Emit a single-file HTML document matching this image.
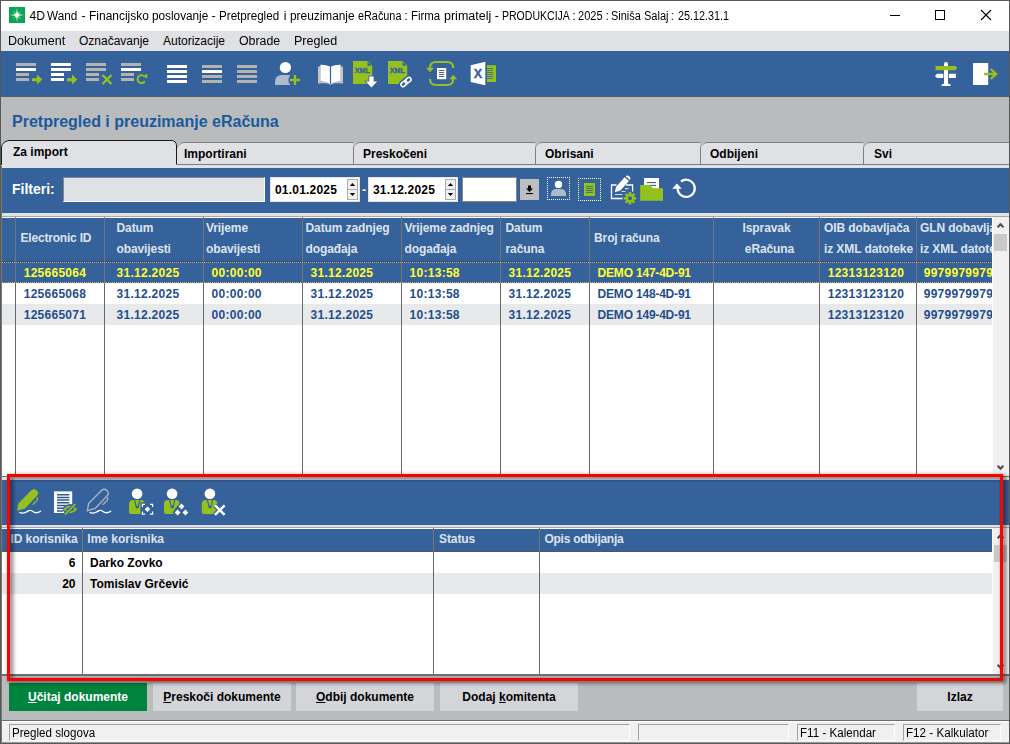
<!DOCTYPE html>
<html lang="hr">
<head>
<meta charset="utf-8">
<title>4D Wand</title>
<style>
*{box-sizing:border-box;margin:0;padding:0}
html,body{width:1010px;height:744px;overflow:hidden}
body{position:relative;background:#b9bbbd;font-family:"Liberation Sans",sans-serif;font-size:12px;color:#000}
.abs{position:absolute}
.t{position:absolute;white-space:nowrap;line-height:14px}
.b{font-weight:bold}
svg{position:absolute;overflow:visible}
/* frame */
#frame{left:0;top:0;width:1010px;height:744px;border:1px solid #585858;pointer-events:none;z-index:50}
#titlebar{left:1px;top:1px;width:1008px;height:30px;background:#fff}
#menubar{left:1px;top:31px;width:1008px;height:20px;background:#e0e1e5}
#toolbar{left:1px;top:51px;width:1008px;height:46px;background:#36629b;border-bottom:1px solid #595b5e}
.seg{font-size:12px;color:#000}
/* tabs */
.tab{position:absolute;top:142px;height:22px;background:#e0e1e5}
.tabtxt{position:absolute;font-weight:bold;font-size:12px;line-height:14px;white-space:nowrap;color:#000}
#tabband{left:1px;top:165px;width:1008px;height:3px;background:#e0e1e5}
#filterbar{left:1px;top:168px;width:1008px;height:45px;background:#36629b}
.fld{position:absolute;top:177px;height:25px;background:#fff;border:1px solid #8a8785}
.fld.d{border-color:#e3e3e3}
.fldtxt{position:absolute;font-weight:bold;font-size:12px;line-height:14px;white-space:nowrap;letter-spacing:.2px}
/* grid */
.hdr{position:absolute;background:#36629b}
.ht{position:absolute;font-weight:bold;font-size:12px;line-height:14px;white-space:nowrap;color:#dde4ee;letter-spacing:-.1px}
.vl{position:absolute;width:1px;background:#6e7073}
.ct{position:absolute;font-weight:bold;font-size:12px;line-height:14px;white-space:nowrap;color:#1f4e8d}
.sel .ct{color:#ffff2e}
.btn{position:absolute;top:683px;height:28px;background:#d4d5d9;font-weight:bold;font-size:12px;line-height:14px}
.btn span{position:absolute;top:7px;white-space:nowrap}
u{text-decoration:underline;text-underline-offset:1px}
.sf{position:absolute;top:724px;height:17px;border:1px solid #a0a0a0;border-right-color:#fff;border-bottom-color:#fff;background:#f0f0f0}
</style>
</head>
<body>
<!-- TITLE BAR -->
<div class="abs" id="titlebar"></div>
<svg style="left:9px;top:7px" width="16" height="16" viewBox="0 0 16 16">
 <defs>
  <radialGradient id="gl" cx="50%" cy="50%" r="50%"><stop offset="0" stop-color="#fff"/><stop offset="0.55" stop-color="#fff" stop-opacity=".95"/><stop offset="1" stop-color="#fff" stop-opacity="0"/></radialGradient>
  <linearGradient id="gv" x1="0" y1="0" x2="0" y2="1"><stop offset="0" stop-color="#fff" stop-opacity="0"/><stop offset=".5" stop-color="#fff" stop-opacity=".95"/><stop offset="1" stop-color="#fff" stop-opacity="0"/></linearGradient>
  <linearGradient id="gh" x1="0" y1="0" x2="1" y2="0"><stop offset="0" stop-color="#fff" stop-opacity="0"/><stop offset=".5" stop-color="#fff" stop-opacity=".95"/><stop offset="1" stop-color="#fff" stop-opacity="0"/></linearGradient>
 </defs>
 <rect width="16" height="16" fill="#08a653"/>
 <rect x="6.9" y="1" width="2.2" height="14" fill="url(#gv)"/>
 <rect x="1" y="6.9" width="14" height="2.2" fill="url(#gh)"/>
 <path d="M4.2 4.2L11.8 11.8M11.8 4.2L4.2 11.8" stroke="#fff" stroke-opacity=".45" stroke-width=".9"/>
 <circle cx="8" cy="8" r="3" fill="url(#gl)"/>
</svg>
<div class="abs" id="ttl" style="left:0;top:9px;width:760px;height:14px"><span class="t seg tw" style="left:29.6px;top:0">4D</span><span class="t seg tw" style="left:47.4px;top:0;transform-origin:0 50%;transform:scaleX(0.977)">Wand</span><span class="t seg tw" style="left:81.4px;top:0">-</span><span class="t seg tw" style="left:88.6px;top:0;transform-origin:0 50%;transform:scaleX(0.998)">Financijsko</span><span class="t seg tw" style="left:151.6px;top:0;transform-origin:0 50%;transform:scaleX(0.981)">poslovanje</span><span class="t seg tw" style="left:211.4px;top:0">-</span><span class="t seg tw" style="left:219.1px;top:0;transform-origin:0 50%;transform:scaleX(0.969)">Pretpregled</span><span class="t seg tw" style="left:283.8px;top:0">i</span><span class="t seg tw" style="left:289.6px;top:0;transform-origin:0 50%;transform:scaleX(0.988)">preuzimanje</span><span class="t seg tw" style="left:357.9px;top:0;transform-origin:0 50%;transform:scaleX(0.904)">eRačuna</span><span class="t seg tw" style="left:404.2px;top:0">:</span><span class="t seg tw" style="left:411.2px;top:0;transform-origin:0 50%;transform:scaleX(0.951)">Firma</span><span class="t seg tw" style="left:444.1px;top:0;transform-origin:0 50%;transform:scaleX(1.042)">primatelj</span><span class="t seg tw" style="left:494.8px;top:0">-</span><span class="t seg tw" style="left:502px;top:0;transform-origin:0 50%;transform:scaleX(0.877)">PRODUKCIJA</span><span class="t seg tw" style="left:572.3px;top:0">:</span><span class="t seg tw" style="left:578.4px;top:0;transform-origin:0 50%;transform:scaleX(0.921)">2025</span><span class="t seg tw" style="left:605.6px;top:0">:</span><span class="t seg tw" style="left:611.3px;top:0;transform-origin:0 50%;transform:scaleX(0.911)">Siniša</span><span class="t seg tw" style="left:644px;top:0;transform-origin:0 50%;transform:scaleX(0.918)">Salaj</span><span class="t seg tw" style="left:670.8px;top:0">:</span><span class="t seg tw" style="left:677.5px;top:0;transform-origin:0 50%;transform:scaleX(0.901)">25.12.31.1</span></div>
<svg style="left:890px;top:10px" width="102" height="11" viewBox="0 0 102 11">
 <path d="M0 5.5H10" stroke="#000" stroke-width="1" fill="none"/>
 <rect x="45.5" y="0.5" width="9" height="9" stroke="#000" stroke-width="1" fill="none"/>
 <path d="M91 0L101 10M101 0L91 10" stroke="#000" stroke-width="1.1" fill="none"/>
</svg>
<!-- MENU BAR -->
<div class="abs" id="menubar"></div>
<div class="t seg" style="left:8px;top:34px;transform-origin:0 50%;transform:scaleX(1.047)">Dokument</div>
<div class="t seg" style="left:79px;top:34px">Označavanje</div>
<div class="t seg" style="left:163px;top:34px">Autorizacije</div>
<div class="t seg" style="left:239px;top:34px;transform-origin:0 50%;transform:scaleX(1.03)">Obrade</div>
<div class="t seg" style="left:294px;top:34px;transform-origin:0 50%;transform:scaleX(1.046)">Pregled</div>
<!-- TOOLBAR -->
<div class="abs" id="toolbar"></div>
<svg style="left:0;top:51px" width="1010" height="46" viewBox="0 51 1010 46" font-family="Liberation Sans, sans-serif">
 <!-- 1 -->
 <g fill="#b5b3b1"><rect x="16" y="63" width="20" height="3"/><rect x="16" y="73" width="13" height="3"/><rect x="16" y="78" width="13" height="3"/></g>
 <rect x="16" y="68" width="20" height="3" fill="#fff"/>
 <path d="M32 78.2H37V74.6L42.3 79.6L37 84.6V81.2H32Z" fill="#95c11f"/>
 <!-- 2 -->
 <g fill="#fff"><rect x="51" y="63" width="20" height="3"/><rect x="51" y="68" width="20" height="3"/><rect x="51" y="73" width="13" height="3"/><rect x="51" y="78" width="13" height="3"/></g>
 <path d="M67 78.2H72V74.6L77.3 79.6L72 84.6V81.2H67Z" fill="#95c11f"/>
 <!-- 3 -->
 <g fill="#b5b3b1"><rect x="86" y="63" width="20" height="3"/><rect x="86" y="68" width="20" height="3"/><rect x="86" y="73" width="13" height="3"/><rect x="86" y="78" width="13" height="3"/></g>
 <path d="M102.5 75L111.5 84M111.5 75L102.5 84" stroke="#95c11f" stroke-width="2.3" fill="none"/>
 <!-- 4 -->
 <g fill="#b5b3b1"><rect x="121" y="63" width="20" height="3"/><rect x="121" y="73" width="13" height="3"/><rect x="121" y="78" width="13" height="3"/></g>
 <rect x="121" y="68" width="20" height="3" fill="#fff"/>
 <path d="M144.8 81.2A3.9 3.9 0 1 1 143.6 75.8" stroke="#95c11f" stroke-width="2.1" fill="none"/>
 <path d="M142.6 76.6L147.2 73.8V78.6Z" fill="#95c11f"/>
 <!-- 5,6,7 -->
 <g fill="#fff"><rect x="167" y="65" width="20" height="3"/><rect x="167" y="70" width="20" height="3"/><rect x="167" y="75" width="20" height="3"/><rect x="167" y="80" width="20" height="3"/></g>
 <g fill="#b5b3b1"><rect x="202" y="65" width="20" height="3"/><rect x="202" y="75" width="20" height="3"/><rect x="202" y="80" width="20" height="3"/></g>
 <rect x="202" y="70" width="20" height="3" fill="#fff"/>
 <g fill="#b5b3b1"><rect x="237" y="65" width="20" height="3"/><rect x="237" y="70" width="20" height="3"/><rect x="237" y="75" width="20" height="3"/><rect x="237" y="80" width="20" height="3"/></g>
 <!-- 8 user+ -->
 <circle cx="285.4" cy="67.5" r="5.6" fill="#fff"/>
 <path d="M275 85V82Q275 75 282 75H292V85Z" fill="#aebbcc"/>
 <circle cx="295" cy="80" r="6.6" fill="#36629b"/>
 <path d="M290 80H300M295 75V85" stroke="#95c11f" stroke-width="2.4" fill="none"/>
 <!-- 9 book -->
 <path d="M318 66.5H320.5V83.2H318Z M340.5 66.5H343V83.2H340.5Z" fill="#c8c3be"/>
 <path d="M318 82H327Q329.5 82.4 330.5 84Q331.5 82.4 334 82H343V83.2H335Q332 83.4 330.5 85Q329 83.4 326 83.2H318Z" fill="#c8c3be"/>
 <path d="M320.4 64.7Q326 64.4 329.9 66.6V83.4Q326 81.4 320.4 81.6Z" fill="#fff"/>
 <path d="M340.6 64.7Q335 64.4 331.1 66.6V83.4Q335 81.4 340.6 81.6Z" fill="#fff"/>
 <!-- 10 XML down -->
 <path d="M353 61H367.5L372.2 65.7V84H353Z" fill="#95c11f"/>
 <path d="M367.5 61.8V65.7H371.4Z" fill="#36629b"/>
 <text x="354.8" y="73.2" font-size="7.6" font-weight="bold" fill="#36629b" stroke="#36629b" stroke-width=".35" textLength="15.2" lengthAdjust="spacingAndGlyphs">XML</text>
 <path d="M369.3 76.5H373.7V81.5H377.2L371.5 87.6L365.8 81.5H369.3Z" fill="#fff" stroke="#36629b" stroke-width="1.6" paint-order="stroke"/>
 <!-- 11 XML link -->
 <path d="M388 61H402.5L407.2 65.7V84H388Z" fill="#95c11f"/>
 <path d="M402.5 61.8V65.7H406.4Z" fill="#36629b"/>
 <text x="389.8" y="73.2" font-size="7.6" font-weight="bold" fill="#36629b" stroke="#36629b" stroke-width=".35" textLength="15.2" lengthAdjust="spacingAndGlyphs">XML</text>
 <g transform="translate(406 82) rotate(-40)">
  <g fill="none" stroke="#36629b" stroke-width="4.4"><rect x="-6" y="-2.1" width="6.8" height="4.2" rx="2.1"/><rect x="-0.8" y="-2.1" width="6.8" height="4.2" rx="2.1"/></g>
  <g fill="none" stroke="#fff" stroke-width="1.5"><rect x="-6" y="-2.1" width="6.8" height="4.2" rx="2.1"/><rect x="-0.8" y="-2.1" width="6.8" height="4.2" rx="2.1"/></g>
 </g>
 <!-- 12 refresh doc -->
 <g fill="none" stroke="#95c11f" stroke-width="2.1">
  <path d="M430 68.5V68Q430 62 436 62H447Q453.2 62 453.2 68"/>
  <path d="M453.2 78.5V79Q453.2 85 447.2 85H436Q430 85 430 79"/>
 </g>
 <path d="M426 67.8H434L430 72.2Z M449.2 79.2H457.2L453.2 74.8Z" fill="#95c11f"/>
 <rect x="437" y="68" width="9.2" height="11.2" fill="#fff"/>
 <path d="M439 70.5H444.2M439 72.5H444.2M439 74.5H444.2M439 76.5H444.2" stroke="#3b4f6b" stroke-width="0.9"/>
 <!-- 13 excel -->
 <path d="M470.7 65.2L485.3 61.8V85.2L470.7 82Z" fill="#fff"/>
 <text x="473.7" y="77.9" font-size="12.6" font-weight="bold" fill="#36629b" stroke="#36629b" stroke-width=".4">X</text>
 <rect x="487" y="65.2" width="9" height="16.8" fill="#95c11f"/>
 <path d="M487 68.5H493M487 70.5H493M487 72.5H493M487 74.5H493M487 76.5H493M487 78.5H493" stroke="#36629b" stroke-width="0.8"/>
 <!-- 14 signpost -->
 <path d="M944 64Q944 62 946 62Q948 62 948 64V84H944Z" fill="#fff"/>
 <path d="M941.4 86Q941.4 83.8 943.5 83.8H948.6Q950.8 83.8 950.8 86Z" fill="#fff"/>
 <path d="M935 65.9H955.4L957.2 68L955.4 70.2H935L936 68Z" fill="#95c11f"/>
 <path d="M937 73.8H943.3V78H937L935 75.9Z M948.8 73.8H956V78H948.8Z" fill="#fff"/>
 <path d="M956 74.6L955 75.9L956 77.2Z" fill="#b5b3b1"/>
 <!-- 15 exit -->
 <rect x="973" y="63" width="15.2" height="22" fill="#fff"/>
 <path d="M984 74H995.5M990.6 69L996.2 74L990.6 79" fill="none" stroke="#95c11f" stroke-width="2.3"/>
</svg>

<!-- PAGE TITLE -->
<div class="t b" style="left:12px;top:112px;font-size:16px;line-height:19px;color:#195a9d">Pretpregled i preuzimanje eRačuna</div>
<!-- TABS -->
<svg style="left:0;top:138px" width="1010" height="30" viewBox="0 138 1010 30">
 <!-- inactive tabs background -->
 <path d="M177 164.5V142.5H1009V164.5Z" fill="#e0e1e5"/>
 <g fill="none" stroke="#7d7f82" stroke-width="1">
  <path d="M177 142.5H1009"/>
  <path d="M177 164.5H1009"/>
  <path d="M177 147.5Q177.5 145.5 179.5 144.5L183 142.5" />
  <path d="M353.5 164V147.5Q353.5 145.5 355.5 144.5L359 142.5" />
  <path d="M535.5 164V147.5Q535.5 145.5 537.5 144.5L541 142.5" />
  <path d="M700.5 164V147.5Q700.5 145.5 702.5 144.5L706 142.5" />
  <path d="M863.5 164V147.5Q863.5 145.5 865.5 144.5L869 142.5" />
 </g>
 <path d="M177 142H183L177.5 146Z M353 142H359L353.8 146Z M535 142H541L535.8 146Z M700 142H706L700.8 146Z M863 142H869L863.8 146Z" fill="#b9bbbd"/>
 <!-- active tab -->
 <path d="M1 168V147Q2 141.5 9 140.5H171Q176.5 140.5 176.5 146V164.5H177V168Z" fill="#e0e1e5"/>
 <path d="M1.5 165V147Q2.5 141.5 9 140.5H171Q176.5 140.5 176.5 146V164.5" fill="none" stroke="#1a1a1a" stroke-width="1"/>
</svg>
<div class="tabtxt" style="left:13px;top:145px">Za import</div>
<div class="tabtxt" style="left:184px;top:147px">Importirani</div>
<div class="tabtxt" style="left:363px;top:147px">Preskočeni</div>
<div class="tabtxt" style="left:545px;top:147px">Obrisani</div>
<div class="tabtxt" style="left:710px;top:147px">Odbijeni</div>
<div class="tabtxt" style="left:874px;top:147px">Svi</div>

<div class="abs" id="tabband"></div>
<!-- FILTER BAR -->
<div class="abs" id="filterbar"></div>
<div class="t b" style="left:12px;top:181px;font-size:14px;line-height:16px;color:#fff">Filteri:</div>
<div class="fld" style="left:63px;width:202px;background:#e0e1e5;border-color:#85878a #fff #fff #85878a"></div>
<div class="fld d" style="left:270px;width:90px"></div>
<div class="fldtxt" style="left:275px;top:183px">01.01.2025</div>
<div class="t b" style="left:362px;top:183px;color:#fff">-</div>
<div class="fld d" style="left:368px;width:90px"></div>
<div class="fldtxt" style="left:373px;top:183px">31.12.2025</div>
<div class="fld" style="left:462px;width:55px"></div>
<!-- spinners -->
<svg style="left:347px;top:179px" width="11" height="21" viewBox="0 0 11 21">
 <rect x=".5" y=".5" width="10" height="10" fill="#f0f0f0" stroke="#adadad"/><rect x=".5" y="10.5" width="10" height="10" fill="#f0f0f0" stroke="#adadad"/>
 <path d="M5.5 4L8.2 7H2.8Z M5.5 17L8.2 14H2.8Z" fill="#000"/>
</svg>
<svg style="left:445px;top:179px" width="11" height="21" viewBox="0 0 11 21">
 <rect x=".5" y=".5" width="10" height="10" fill="#f0f0f0" stroke="#adadad"/><rect x=".5" y="10.5" width="10" height="10" fill="#f0f0f0" stroke="#adadad"/>
 <path d="M5.5 4L8.2 7H2.8Z M5.5 17L8.2 14H2.8Z" fill="#000"/>
</svg>
<!-- download btn -->
<div class="abs" style="left:520px;top:179px;width:19px;height:21px;background:#bcbec1"></div>
<svg style="left:526px;top:185px" width="7" height="10" viewBox="0 0 7 10">
 <path d="M2 0.4H5V3.5H7L3.5 7L0 3.5H2Z" fill="#000"/><rect x="0" y="8" width="7" height="1.1" fill="#000"/>
</svg>
<svg style="left:0;top:168px" width="1010" height="45" viewBox="0 168 1010 45">
 <!-- user dotted -->
 <path d="M547 177.5H570M547 199.5H570M547.5 177V200M569.5 177V200" fill="none" stroke="#fff" stroke-width="1" stroke-dasharray="1 1" shape-rendering="crispEdges"/>
 <circle cx="558.5" cy="184.4" r="3.7" fill="#fff"/>
 <path d="M551 196V194.5Q551 189 556.5 189H560.5Q566 189 566 194.5V196Z" fill="#aebbcc"/>
 <!-- doc dotted -->
 <path d="M578 178.5H601M578 200.5H601M578.5 178V201M600.5 178V201" fill="none" stroke="#fff" stroke-width="1" stroke-dasharray="1 1" shape-rendering="crispEdges"/>
 <rect x="584" y="183" width="11" height="13" fill="#95c11f"/>
 <path d="M586 186.4H593M586 188.4H593M586 190.4H593M586 192.4H593" stroke="#36629b" stroke-width="0.9"/>
 <!-- pen + gear -->
 <path d="M616.5 185H611.5V198.5H624" fill="none" stroke="#fff" stroke-width="1.3"/>
 <path d="M626 185H632.6V192.5" fill="none" stroke="#fff" stroke-width="1.3"/>
 <path d="M625 188.6H628.5M621.5 191.5H625.5M615 194.5H622.5" stroke="#d5d8dd" stroke-width="1.1" fill="none"/>
 <path d="M614.8 192.2L616 187L624.6 177.2L629 181L620.4 190.6Z" fill="#fff"/>
 <path d="M625.6 176.2Q627.6 174.6 629.4 176.2Q631.2 177.8 629.9 179.9Z" fill="#fff"/>
 <g transform="translate(630 198.3)">
  <circle r="7.4" fill="#36629b"/>
  <g fill="#95c11f"><circle r="4.3"/>
   <rect x="-1.3" y="-6.2" width="2.6" height="12.4"/><rect x="-1.3" y="-6.2" width="2.6" height="12.4" transform="rotate(45)"/><rect x="-1.3" y="-6.2" width="2.6" height="12.4" transform="rotate(90)"/><rect x="-1.3" y="-6.2" width="2.6" height="12.4" transform="rotate(135)"/></g>
  <circle r="2" fill="#36629b"/>
 </g>
 <!-- folder -->
 <rect x="644" y="178" width="15" height="12" fill="#fff"/>
 <path d="M647 182.6H656M647 185.4H656" stroke="#3b4f6b" stroke-width="1"/>
 <path d="M640.2 185H650L653 188.2H663V200.8H640.2Z" fill="#95c11f"/>
 <!-- refresh -->
 <path d="M677.6 188.5A8.6 8.6 0 1 0 681 181.5" fill="none" stroke="#fff" stroke-width="2.2"/>
 <path d="M672.2 188.8L677 183.6L681.8 188.8Z" fill="#fff"/>
</svg>

<!-- GRID 1 -->
<div class="abs" style="left:1px;top:213px;width:1008px;height:3px;background:#e0e1e5"></div>
<div class="abs" style="left:1px;top:216px;width:1008px;height:1px;background:#a5a7aa"></div>
<div class="abs" style="left:2px;top:217px;width:1006px;height:259px;background:#fff"></div>
<div class="abs" style="left:1px;top:217px;width:1px;height:259px;background:#8b8d90"></div>
<div class="abs" id="g1" style="left:2px;top:217px;width:990px;height:259px;overflow:hidden">
 <div class="hdr" style="left:0;top:1px;width:990px;height:44px"></div>
 <div class="abs" style="left:0;top:45px;width:990px;height:21px;background:#36629b"></div>
 <div class="abs" style="left:0;top:44px;width:990px;height:1px;background:#2f4d78"></div>
 <div class="abs" style="left:0;top:87px;width:990px;height:21px;background:#e8e9eb"></div>
 <div class="ht" style="left:18.5px;top:11px;line-height:21px;letter-spacing:-.2px">Electronic ID</div>
 <div class="ht" style="left:114.5px;top:1px;line-height:21px;">Datum</div>
 <div class="ht" style="left:114.5px;top:22px;line-height:21px;">obavijesti</div>
 <div class="ht" style="left:204px;top:1px;line-height:21px;">Vrijeme</div>
 <div class="ht" style="left:204px;top:22px;line-height:21px;">obavijesti</div>
 <div class="ht" style="left:303.5px;top:1px;line-height:21px;">Datum zadnjeg</div>
 <div class="ht" style="left:303.5px;top:22px;line-height:21px;">događaja</div>
 <div class="ht" style="left:402.5px;top:1px;line-height:21px;">Vrijeme zadnjeg</div>
 <div class="ht" style="left:402.5px;top:22px;line-height:21px;">događaja</div>
 <div class="ht" style="left:503.5px;top:1px;line-height:21px;">Datum</div>
 <div class="ht" style="left:503.5px;top:22px;line-height:21px;">računa</div>
 <div class="ht" style="left:592px;top:11px;line-height:21px;">Broj računa</div>
 <div class="ht" style="left:712px;top:1px;line-height:21px;width:105px;text-align:center">Ispravak</div>
 <div class="ht" style="left:715px;top:22px;line-height:21px;width:105px;text-align:center">eRačuna</div>
 <div class="ht" style="left:822px;top:1px;line-height:21px;">OIB dobavljača</div>
 <div class="ht" style="left:822px;top:22px;line-height:21px;">iz XML datoteke</div>
 <div class="ht" style="left:918px;top:1px;line-height:21px;">GLN dobavljača</div>
 <div class="ht" style="left:918px;top:22px;line-height:21px;">iz XML datoteke</div>
 <div class="abs sel" style="left:0;top:45px;width:990px;height:21px">
  <div class="ct" style="left:21.7px;top:1px;line-height:21px;letter-spacing:.27px">125665064</div>
  <div class="ct" style="left:114.6px;top:1px;line-height:21px;letter-spacing:.27px">31.12.2025</div>
  <div class="ct" style="left:209.6px;top:1px;line-height:21px;letter-spacing:.27px">00:00:00</div>
  <div class="ct" style="left:308.5px;top:1px;line-height:21px;letter-spacing:.27px">31.12.2025</div>
  <div class="ct" style="left:407.6px;top:1px;line-height:21px;letter-spacing:.27px">10:13:58</div>
  <div class="ct" style="left:506.5px;top:1px;line-height:21px;letter-spacing:.27px">31.12.2025</div>
  <div class="ct" style="left:595.6px;top:1px;line-height:21px;letter-spacing:-.2px">DEMO 147-4D-91</div>
  <div class="ct" style="left:825.7px;top:1px;line-height:21px;letter-spacing:.27px">12313123120</div>
  <div class="ct" style="left:921.7px;top:1px;line-height:21px;letter-spacing:.27px">9979979979001</div>
 </div>
 <div class="abs " style="left:0;top:66px;width:990px;height:21px">
  <div class="ct" style="left:21.7px;top:1px;line-height:21px;letter-spacing:.27px">125665068</div>
  <div class="ct" style="left:114.6px;top:1px;line-height:21px;letter-spacing:.27px">31.12.2025</div>
  <div class="ct" style="left:209.6px;top:1px;line-height:21px;letter-spacing:.27px">00:00:00</div>
  <div class="ct" style="left:308.5px;top:1px;line-height:21px;letter-spacing:.27px">31.12.2025</div>
  <div class="ct" style="left:407.6px;top:1px;line-height:21px;letter-spacing:.27px">10:13:58</div>
  <div class="ct" style="left:506.5px;top:1px;line-height:21px;letter-spacing:.27px">31.12.2025</div>
  <div class="ct" style="left:595.6px;top:1px;line-height:21px;letter-spacing:-.2px">DEMO 148-4D-91</div>
  <div class="ct" style="left:825.7px;top:1px;line-height:21px;letter-spacing:.27px">12313123120</div>
  <div class="ct" style="left:921.7px;top:1px;line-height:21px;letter-spacing:.27px">9979979979001</div>
 </div>
 <div class="abs " style="left:0;top:87px;width:990px;height:21px">
  <div class="ct" style="left:21.7px;top:1px;line-height:21px;letter-spacing:.27px">125665071</div>
  <div class="ct" style="left:114.6px;top:1px;line-height:21px;letter-spacing:.27px">31.12.2025</div>
  <div class="ct" style="left:209.6px;top:1px;line-height:21px;letter-spacing:.27px">00:00:00</div>
  <div class="ct" style="left:308.5px;top:1px;line-height:21px;letter-spacing:.27px">31.12.2025</div>
  <div class="ct" style="left:407.6px;top:1px;line-height:21px;letter-spacing:.27px">10:13:58</div>
  <div class="ct" style="left:506.5px;top:1px;line-height:21px;letter-spacing:.27px">31.12.2025</div>
  <div class="ct" style="left:595.6px;top:1px;line-height:21px;letter-spacing:-.2px">DEMO 149-4D-91</div>
  <div class="ct" style="left:825.7px;top:1px;line-height:21px;letter-spacing:.27px">12313123120</div>
  <div class="ct" style="left:921.7px;top:1px;line-height:21px;letter-spacing:.27px">9979979979001</div>
 </div>
 <div class="vl" style="left:13px;top:0;height:66px;background:#757575"></div>
 <div class="vl" style="left:13px;top:66px;height:193px;background:#666869"></div>
 <div class="vl" style="left:102px;top:0;height:66px;background:#757575"></div>
 <div class="vl" style="left:102px;top:66px;height:193px;background:#666869"></div>
 <div class="vl" style="left:201px;top:0;height:66px;background:#757575"></div>
 <div class="vl" style="left:201px;top:66px;height:193px;background:#666869"></div>
 <div class="vl" style="left:300px;top:0;height:66px;background:#757575"></div>
 <div class="vl" style="left:300px;top:66px;height:193px;background:#666869"></div>
 <div class="vl" style="left:399px;top:0;height:66px;background:#757575"></div>
 <div class="vl" style="left:399px;top:66px;height:193px;background:#666869"></div>
 <div class="vl" style="left:498px;top:0;height:66px;background:#757575"></div>
 <div class="vl" style="left:498px;top:66px;height:193px;background:#666869"></div>
 <div class="vl" style="left:587px;top:0;height:66px;background:#757575"></div>
 <div class="vl" style="left:587px;top:66px;height:193px;background:#666869"></div>
 <div class="vl" style="left:711px;top:0;height:66px;background:#757575"></div>
 <div class="vl" style="left:711px;top:66px;height:193px;background:#666869"></div>
 <div class="vl" style="left:817px;top:0;height:66px;background:#757575"></div>
 <div class="vl" style="left:817px;top:66px;height:193px;background:#666869"></div>
 <div class="vl" style="left:914px;top:0;height:66px;background:#757575"></div>
 <div class="vl" style="left:914px;top:66px;height:193px;background:#666869"></div>
 <div class="abs" style="left:0;top:45px;width:990px;height:1px;background:repeating-linear-gradient(90deg,#dba25c 0 1px,transparent 1px 2px)"></div>
 <div class="abs" style="left:0;top:65px;width:990px;height:1px;background:repeating-linear-gradient(90deg,#dba25c 0 1px,transparent 1px 2px)"></div>
</div>
<div class="abs" style="left:993px;top:217px;width:16px;height:259px;background:#f0f0f0"></div>
<svg style="left:992px;top:217px" width="17" height="259" viewBox="0 0 17 259"><path d="M5.6 10.2L8.5 7.3L11.4 10.2M5.6 248.8L8.5 251.7L11.4 248.8" fill="none" stroke="#505050" stroke-width="2.1"/><rect x="2" y="17" width="13" height="17" fill="#c9c9c9"/></svg>

<!-- LOWER TOOLBAR -->
<div class="abs" style="left:1px;top:476px;width:1008px;height:1px;background:#6d6f72"></div>
<div class="abs" style="left:1px;top:477px;width:1008px;height:3px;background:#e0e1e5"></div>
<div class="abs" style="left:1px;top:480px;width:1008px;height:45px;background:#36629b"></div>
<svg style="left:0;top:480px" width="1010" height="45" viewBox="0 480 1010 45">
 <path d="M17.2 510.8L18.4 503.6L31.2 490.6Q34 488.2 36.6 490.4Q39.4 493 37 495.8L25 508.4Z" fill="#95c11f"/><path d="M36.6 497.4Q38.4 498.6 37 500.4L32.6 504.8" fill="none" stroke="#95c11f" stroke-width="1.3"/><path d="M19.4 512.4Q23.5 514.2 27.5 511.4Q30.6 509.2 33.2 511.8Q36.2 514 41 511" fill="none" stroke="#fff" stroke-width="1.3"/>
 <!-- doc eye -->
 <rect x="54" y="491.4" width="18.2" height="21.6" fill="#fff"/>
 <path d="M57 494.7H69.4M57 497.4H69.4M57 500.1H69.4M57 502.8H69.4M57 505.5H66M57 508.2H64M57 510.9H63" stroke="#2f5890" stroke-width="1.5"/>
 <ellipse cx="70.2" cy="509.3" rx="7.4" ry="5.4" fill="#36629b"/>
 <path d="M64.4 509.3Q70.2 503.4 76 509.3Q70.2 515.2 64.4 509.3Z" fill="none" stroke="#95c11f" stroke-width="1.8"/>
 <circle cx="70.2" cy="509.3" r="1.7" fill="#95c11f"/>
 <path d="M65 514.6L75.4 504" stroke="#36629b" stroke-width="3.6"/><path d="M65 514.6L75.4 504" stroke="#95c11f" stroke-width="1.7"/>
 <!-- pen outline -->
 <g transform="translate(70.2 0)"><path d="M17.2 510.8L18.4 503.6L31.2 490.6Q34 488.2 36.6 490.4Q39.4 493 37 495.8L25 508.4Z" fill="none" stroke="#adb4bf" stroke-width="1.4"/><path d="M36.6 497.4Q38.4 498.6 37 500.4L32.6 504.8" fill="none" stroke="#adb4bf" stroke-width="1.3"/><path d="M19.4 512.4Q23.5 514.2 27.5 511.4Q30.6 509.2 33.2 511.8Q36.2 514 41 511" fill="none" stroke="#fff" stroke-width="1.3"/></g>
 <!-- users -->
 <g><circle cx="137.1" cy="493.8" r="5.3" fill="#fff"/>
   <path d="M129 511.5V504Q129 500 133 500H141Q144.6 500 144.6 504V514H131.5Q129 514 129 511.5Z" fill="#95c11f"/>
   <path d="M134.6 500L136.4 507.6H138L139.8 500" fill="none" stroke="#36629b" stroke-width="1.1"/>
   <rect x="136.2" y="505.6" width="2" height="2.4" fill="#36629b"/></g>
 <rect x="140.4" y="502.4" width="14" height="13.4" fill="#36629b"/>
 <path d="M142.4 507V504.4H145M150 504.4H152.6V507M152.6 511.6V514.2H150M145 514.2H142.4V511.6" fill="none" stroke="#fff" stroke-width="1.2"/>
 <path d="M147.5 506.5L150.3 509.3L147.5 512.1L144.7 509.3Z" fill="#fff"/>
 <g transform="translate(35 0)"><circle cx="137.1" cy="493.8" r="5.3" fill="#fff"/>
   <path d="M129 511.5V504Q129 500 133 500H141Q144.6 500 144.6 504V514H131.5Q129 514 129 511.5Z" fill="#95c11f"/>
   <path d="M134.6 500L136.4 507.6H138L139.8 500" fill="none" stroke="#36629b" stroke-width="1.1"/>
   <rect x="136.2" y="505.6" width="2" height="2.4" fill="#36629b"/></g>
 <path d="M181.5 502L187 507.5L190.5 512.5L185.4 517H177.5L172.5 512.5L176 507.5Z" fill="#36629b"/>
 <path d="M181.5 503.6L184.4 506.5L181.5 509.4L178.6 506.5Z M177.6 509.6L180.5 512.5L177.6 515.4L174.7 512.5Z M185.4 509.6L188.3 512.5L185.4 515.4L182.5 512.5Z" fill="#fff"/>
 <g transform="translate(72.8 0)"><circle cx="137.1" cy="493.8" r="5.3" fill="#fff"/>
   <path d="M129 511.5V504Q129 500 133 500H141Q144.6 500 144.6 504V514H131.5Q129 514 129 511.5Z" fill="#95c11f"/>
   <path d="M134.6 500L136.4 507.6H138L139.8 500" fill="none" stroke="#36629b" stroke-width="1.1"/>
   <rect x="136.2" y="505.6" width="2" height="2.4" fill="#36629b"/></g>
 <path d="M215 505.3L224.6 514.9M224.6 505.3L215 514.9" stroke="#36629b" stroke-width="5"/>
 <path d="M215 505.3L224.6 514.9M224.6 505.3L215 514.9" stroke="#fff" stroke-width="2.5"/>
</svg>

<div class="abs" style="left:1px;top:525px;width:1008px;height:2px;background:#e0e1e5"></div>
<div class="abs" style="left:1px;top:527px;width:1008px;height:1px;background:#a5a7aa"></div>
<div class="abs" style="left:2px;top:528px;width:1006px;height:146px;background:#fff"></div>
<div class="abs" style="left:1px;top:528px;width:1px;height:146px;background:#8b8d90"></div>
<div class="abs" id="g2" style="left:2px;top:528px;width:990px;height:146px;overflow:hidden">
 <div class="hdr" style="left:0;top:1px;width:990px;height:22px"></div>
 <div class="abs" style="left:0;top:23px;width:990px;height:1px;background:#50555e"></div>
 <div class="abs" style="left:0;top:45px;width:990px;height:21px;background:#e8e9eb"></div>
 <div class="ht" style="left:8.5px;top:1px;line-height:21px;letter-spacing:-0.08px">ID korisnika</div>
 <div class="ht" style="left:85.3px;top:1px;line-height:21px;letter-spacing:0px">Ime korisnika</div>
 <div class="ht" style="left:437px;top:1px;line-height:21px;letter-spacing:-0.08px">Status</div>
 <div class="ht" style="left:542.5px;top:1px;line-height:21px;letter-spacing:-0.27px">Opis odbijanja</div>
 <div class="ct" style="left:0;top:25px;width:73.5px;text-align:right;line-height:21px;color:#000">6</div>
 <div class="ct" style="left:88px;top:25px;line-height:21px;color:#000">Darko Zovko</div>
 <div class="ct" style="left:0;top:46px;width:73.5px;text-align:right;line-height:21px;color:#000">20</div>
 <div class="ct" style="left:88px;top:46px;line-height:21px;color:#000">Tomislav Grčević</div>
 <div class="vl" style="left:80px;top:0;height:23px;background:#757575"></div>
 <div class="vl" style="left:80px;top:23px;height:123px;background:#666869"></div>
 <div class="vl" style="left:431px;top:0;height:23px;background:#757575"></div>
 <div class="vl" style="left:431px;top:23px;height:123px;background:#666869"></div>
 <div class="vl" style="left:537px;top:0;height:23px;background:#757575"></div>
 <div class="vl" style="left:537px;top:23px;height:123px;background:#666869"></div>
</div>
<div class="abs" style="left:993px;top:528px;width:16px;height:146px;background:#f0f0f0"></div>
<svg style="left:992px;top:528px" width="17" height="146" viewBox="0 0 17 146"><path d="M5.6 10.2L8.5 7.3L11.4 10.2M5.6 136.8L8.5 139.7L11.4 136.8" fill="none" stroke="#505050" stroke-width="2.1"/><rect x="2" y="17" width="13" height="17" fill="#c9c9c9"/></svg>
<div class="abs" style="left:1px;top:674px;width:1008px;height:2px;background:#6d6f72"></div>

<!-- GRID 2 -->

<!-- BUTTONS -->
<div class="btn" style="left:9px;width:138px;background:#00843d;color:#fff;text-align:center;line-height:28px"><u>U</u>čitaj dokumente</div>
<div class="btn" style="left:153px;width:138px;text-align:center;line-height:28px"><u>P</u>reskoči dokumente</div>
<div class="btn" style="left:296px;width:138px;text-align:center;line-height:28px"><u>O</u>dbij dokumente</div>
<div class="btn" style="left:440px;width:138px;text-align:center;line-height:28px">Dodaj <u>k</u>omitenta</div>
<div class="btn" style="left:917px;width:86px;text-align:center;line-height:28px">Izlaz</div>

<!-- STATUS -->
<div class="abs" style="left:1px;top:720px;width:1008px;height:1px;background:#696b6e"></div>
<div class="abs" style="left:1px;top:721px;width:1008px;height:1px;background:#fff"></div>
<div class="abs" style="left:1px;top:722px;width:1008px;height:21px;background:#f0f0f0"></div>
<div class="sf" style="left:9px;width:621px"></div>
<div class="sf" style="left:638px;width:151px"></div>
<div class="sf" style="left:797px;width:98px"></div>
<div class="sf" style="left:903px;width:98px"></div>
<div class="t seg" id="st1" style="left:12px;top:726px;transform-origin:0 50%;transform:scaleX(0.967)">Pregled slogova</div>
<div class="t seg" id="st2" style="left:800px;top:726px;transform-origin:0 50%;transform:scaleX(0.968)">F11 - Kalendar</div>
<div class="t seg" id="st3" style="left:906px;top:726px;transform-origin:0 50%;transform:scaleX(0.972)">F12 - Kalkulator</div>
<div class="abs" style="left:0;top:742px;width:1010px;height:1px;background:#9a9a9a"></div>
<div class="abs" style="left:0;top:743px;width:1010px;height:1px;background:#585858"></div>

<!-- RED RECT -->
<svg style="left:0;top:466px;z-index:40" width="1010" height="224" viewBox="0 466 1010 224">
 <defs><filter id="sh" x="-2%" y="-6%" width="104%" height="112%"><feGaussianBlur stdDeviation="2.3"/></filter></defs>
 <rect x="10.8" y="477" width="993" height="204" fill="none" stroke="#000" stroke-opacity=".6" stroke-width="3.6" filter="url(#sh)"/>
 <rect x="8.5" y="475.5" width="993" height="204" fill="none" stroke="#ff0000" stroke-width="3"/>
</svg>

<div class="abs" style="left:1px;top:166px;width:1px;height:576px;background:#77787a;z-index:49"></div>
<div class="abs" id="frame"></div>
</body>
</html>
